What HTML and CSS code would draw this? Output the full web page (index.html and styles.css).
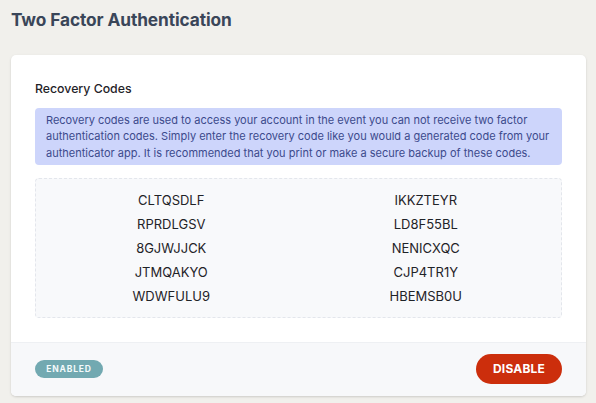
FILE: index.html
```html
<!DOCTYPE html>
<html lang="en">
<head>
<meta charset="utf-8">
<title>Two Factor Authentication</title>
<link rel="stylesheet" href="styles.css">
</head>
<body>
<main class="page">
  <h1 class="page-title">Two Factor Authentication</h1>
  <section class="card">
    <div class="card-body">
      <h2 class="card-heading">Recovery Codes</h2>
      <div class="info">
        Recovery codes are used to access your account in the event you can not receive two factor authentication codes. Simply enter the recovery code like you would a generated code from your authenticator app. It is recommended that you print or make a secure backup of these codes.
      </div>
      <div class="codes">
        <span class="code">CLTQSDLF</span>
        <span class="code">IKKZTEYR</span>
        <span class="code">RPRDLGSV</span>
        <span class="code">LD8F55BL</span>
        <span class="code">8GJWJJCK</span>
        <span class="code">NENICXQC</span>
        <span class="code">JTMQAKYO</span>
        <span class="code">CJP4TR1Y</span>
        <span class="code">WDWFULU9</span>
        <span class="code">HBEMSB0U</span>
      </div>
    </div>
    <div class="card-footer">
      <span class="badge">ENABLED</span>
      <button class="btn-disable" type="button">DISABLE</button>
    </div>
  </section>
</main>
</body>
</html>
```

FILE: styles.css
```css
* { box-sizing: border-box; }
html, body { margin: 0; padding: 0; }
body {
  background: #f1f0ec;
  font-family: Inter, "Noto Sans", "Liberation Sans", sans-serif;
  color: #1f2328;
}
.page {
  padding: 9px 10px 8px 11px;
}
.page-title {
  margin: 0;
  font-size: 17.3px;
  line-height: 22px;
  font-weight: 700;
  color: #3a4659;
  letter-spacing: -0.1px;
}
.card {
  margin-top: 24px;
  background: #ffffff;
  border-radius: 5px;
  box-shadow: 0 1px 3px rgba(0,0,0,0.10), 0 1px 2px rgba(0,0,0,0.06);
  overflow: hidden;
}
.card-body {
  padding: 24px 24px 24px 24px;
}
.card-heading {
  margin: 0 0 9px 0;
  font-size: 12.3px;
  line-height: 20px;
  font-weight: 500;
  color: #1f2328;
}
.info {
  background: #cdd5fb;
  color: #3c4a8c;
  border-radius: 4px;
  padding: 3.5px 6px 3.5px 11px;
  font-size: 11px;
  line-height: 16.5px;
}
.codes {
  margin-top: 13px;
  background: #f8f9fb;
  border: 1px dashed #e3e6ec;
  border-radius: 4px;
  padding: 9px 8px;
  display: grid;
  grid-template-columns: 1fr 1fr;
}
.code {
  text-align: center;
  font-size: 13px;
  line-height: 24px;
  color: #1f2328;
}
.card-footer {
  background: #f7f8fa;
  border-top: 1px solid #eef0f3;
  padding: 11px 24px 12px 24px;
  display: flex;
  align-items: center;
  justify-content: space-between;
}
.badge {
  display: inline-flex;
  align-items: center;
  justify-content: center;
  width: 68px;
  height: 18px;
  border-radius: 9px;
  background: #72a9b1;
  color: #f4fafb;
  font-size: 8.5px;
  font-weight: 700;
  letter-spacing: 0.8px;
}
.btn-disable {
  width: 86px;
  height: 30px;
  border: none;
  border-radius: 15px;
  background: #cc2e0c;
  color: #ffffff;
  font-family: inherit;
  font-size: 12px;
  font-weight: 700;
  letter-spacing: 0.2px;
  padding: 0;
}
```
